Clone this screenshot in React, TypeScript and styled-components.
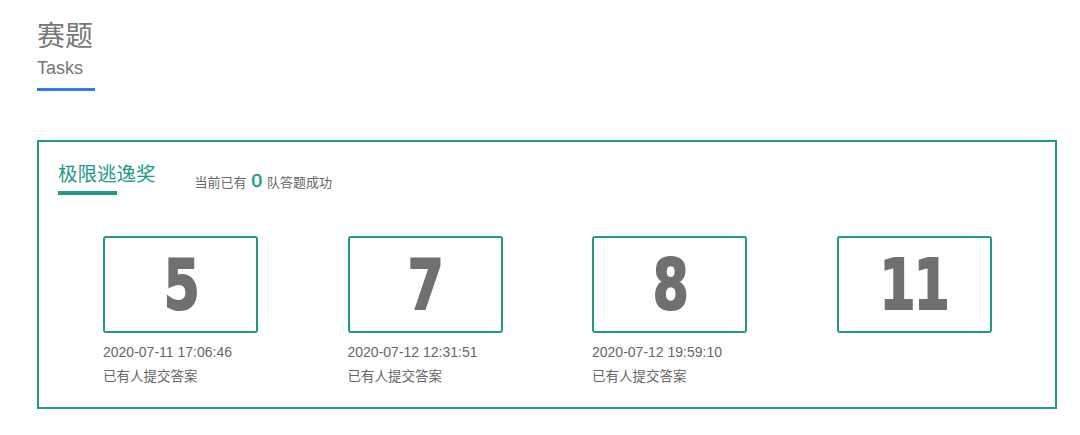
import React from "react";
import styled, { createGlobalStyle } from "styled-components";

const teal = "#1e9a85";
const gray = "#777777";

const GlobalStyle = createGlobalStyle`
  body {
    margin: 0;
    background: #ffffff;
    font-family: "Liberation Sans", "Noto Sans CJK SC", sans-serif;
  }
`;

interface Task {
  num: number;
  time?: string;
}

const tasks: Task[] = [
  { num: 5, time: "2020-07-11 17:06:46" },
  { num: 7, time: "2020-07-12 12:31:51" },
  { num: 8, time: "2020-07-12 19:59:10" },
  { num: 11 },
];

// #region Header
const Page = styled.div`
  width: 1080px;
  height: 435px;
  padding: 17px 23px 0 37px;
  box-sizing: border-box;
`;
const Heading = styled.div`
  display: flex;
  flex-direction: column;
  align-items: flex-start;
`;
const Title = styled.h1`
  margin: 0;
  font-size: 28px;
  line-height: 40px;
  font-weight: 400;
  color: ${gray};
`;
const SubTitle = styled.div`
  font-size: 18px;
  line-height: 22px;
  color: ${gray};
  padding-bottom: 9px;
  border-bottom: 3px solid #2d7cf0;
  width: 58px;
`;
// #endregion

// #region Panel
const Panel = styled.section`
  margin-top: 49px;
  height: 269px;
  box-sizing: border-box;
  border: 2px solid ${teal};
  padding: 20px 0 0 19px;
`;
const PanelHead = styled.div`
  display: flex;
  align-items: flex-start;
  gap: 39px;
`;
const PanelTitle = styled.div`
  font-size: 19.5px;
  line-height: 25px;
  color: ${teal};
  padding-bottom: 8px;
  position: relative;

  &::after {
    content: "";
    position: absolute;
    left: 0;
    bottom: 0;
    width: 59px;
    height: 4px;
    background: ${teal};
  }
`;
const Status = styled.div`
  font-size: 13px;
  line-height: 25px;
  color: #666;
  padding-top: 6px;
  display: flex;
  align-items: baseline;
  gap: 5px;
`;
const Count = styled.span`
  font-size: 19px;
  font-weight: 400;
  color: ${teal};
  -webkit-text-stroke: 0.6px ${teal};
`;
const CardRow = styled.div`
  display: flex;
  gap: 89.5px;
  padding-left: 45px;
  margin-top: 41px;
`;
const CardCol = styled.div`
  display: flex;
  flex-direction: column;
  width: 155px;
`;
const Card = styled.div`
  height: 97px;
  box-sizing: border-box;
  border: 2px solid ${teal};
  border-radius: 3px;
  display: flex;
  align-items: center;
  justify-content: center;
`;
const Num = styled.span`
  font-family: "DejaVu Sans Condensed", "Liberation Sans", sans-serif;
  font-weight: 700;
  font-size: 70px;
  line-height: 1;
  color: #707070;
  -webkit-text-stroke: 2px #707070;
  display: inline-block;
  transform: scaleX(0.82);
  letter-spacing: -2px;
`;
const MetaTime = styled.div`
  font-size: 14px;
  line-height: 24px;
  color: #666;
  margin-top: 7px;
`;
const MetaNote = styled.div`
  font-size: 13.5px;
  line-height: 26px;
  color: #666;
`;
// #endregion

export default function App() {
  return (
    <Page>
      <GlobalStyle />
      <Heading>
        <Title>赛题</Title>
        <SubTitle>Tasks</SubTitle>
      </Heading>
      <Panel>
        <PanelHead>
          <PanelTitle>极限逃逸奖</PanelTitle>
          <Status>
            当前已有 <Count>0</Count> 队答题成功
          </Status>
        </PanelHead>
        <CardRow>
          {tasks.map((t) => (
            <CardCol key={t.num}>
              <Card>
                <Num>{t.num}</Num>
              </Card>
              {t.time && (
                <>
                  <MetaTime>{t.time}</MetaTime>
                  <MetaNote>已有人提交答案</MetaNote>
                </>
              )}
            </CardCol>
          ))}
        </CardRow>
      </Panel>
    </Page>
  );
}
